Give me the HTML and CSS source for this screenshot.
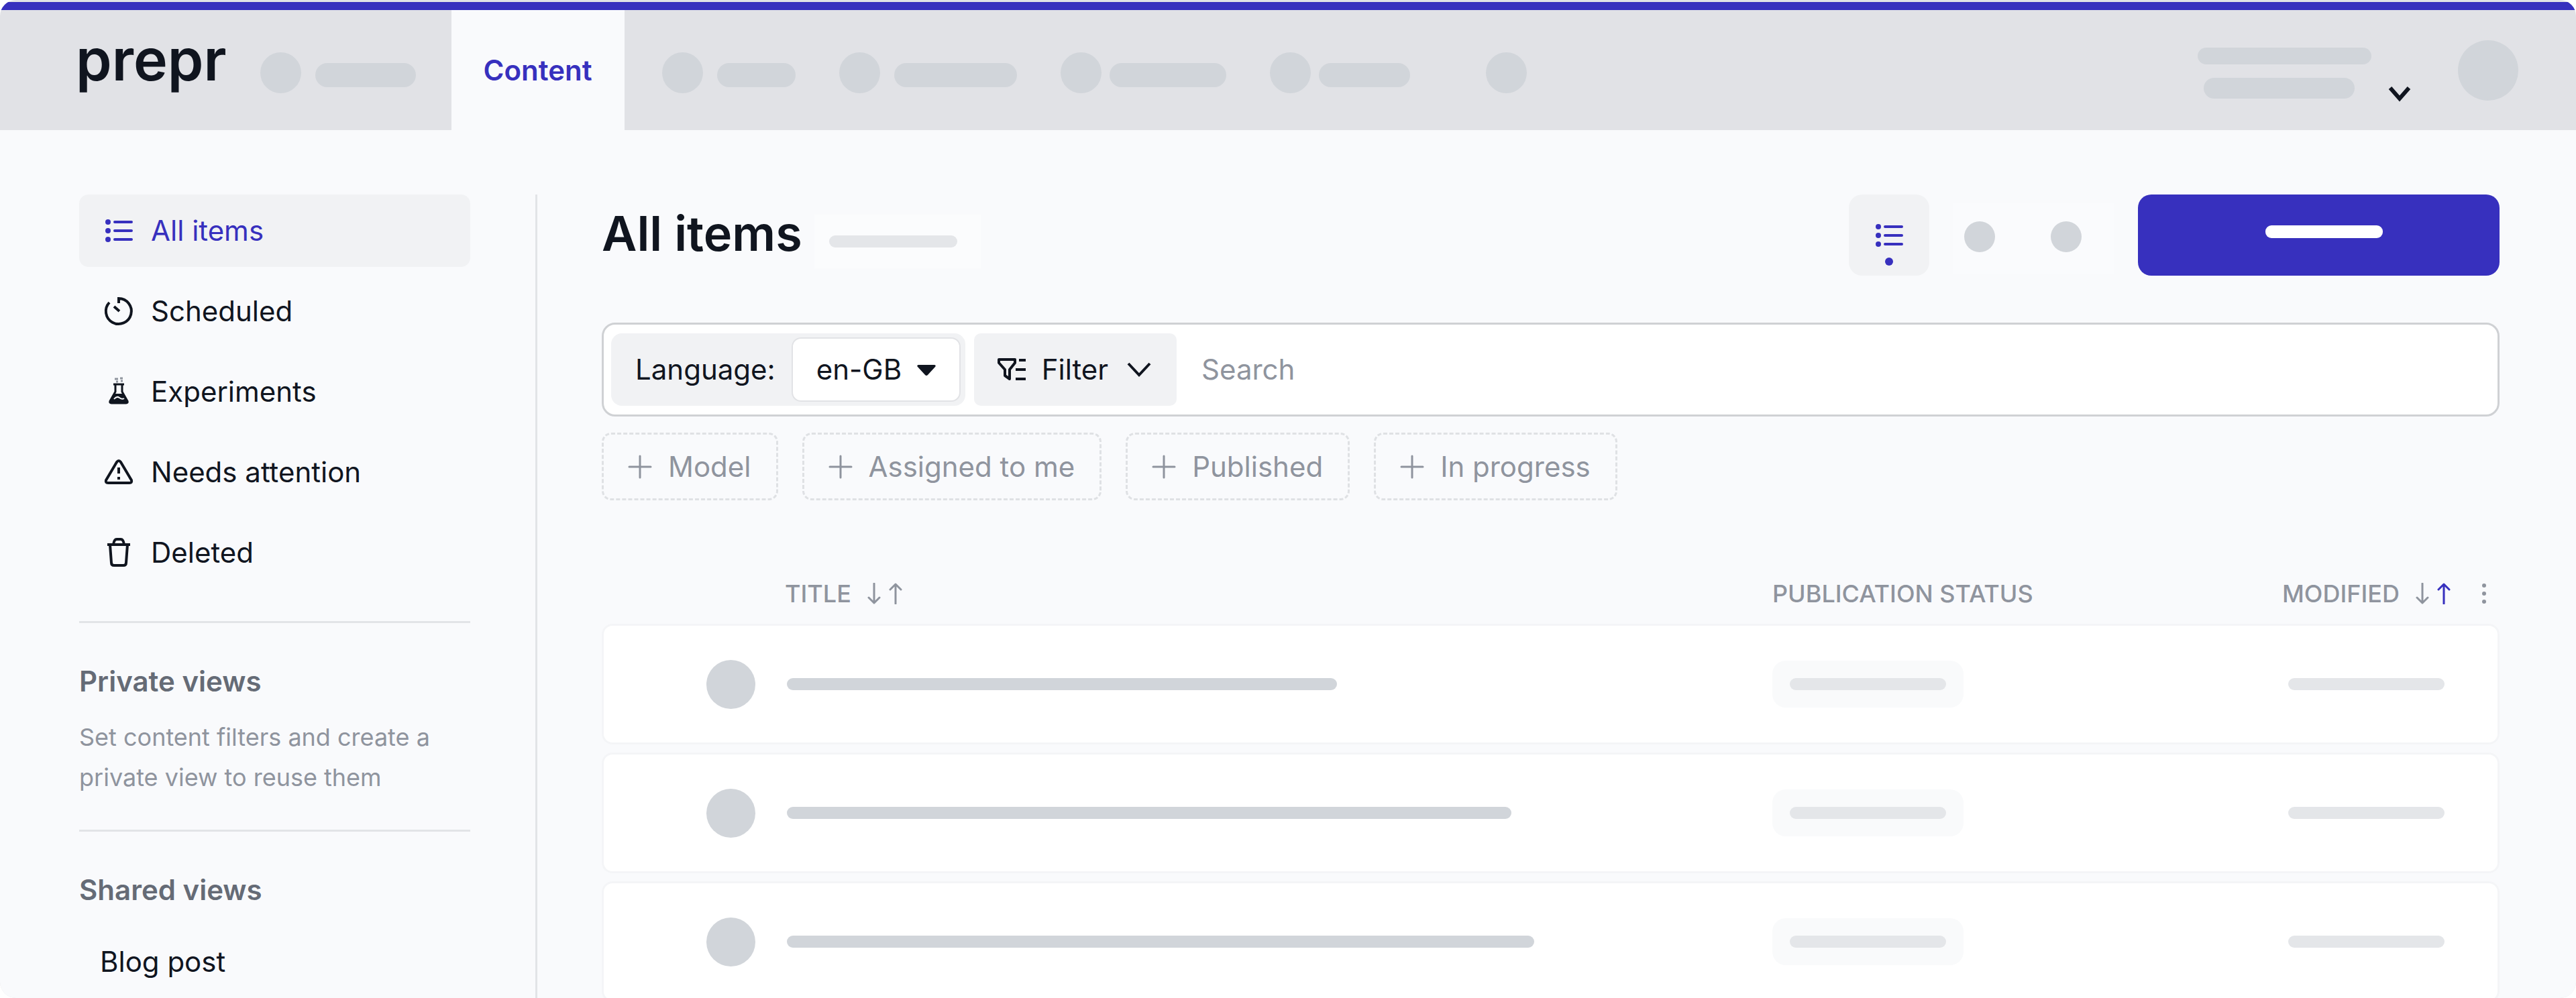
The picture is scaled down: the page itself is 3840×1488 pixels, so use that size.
FILE: index.html
```html
<!DOCTYPE html>
<html lang="en">
<head>
<meta charset="utf-8">
<meta name="viewport" content="width=device-width, initial-scale=1">
<title>All items – prepr</title>
<link rel="stylesheet" href="styles.css">
</head>
<body>
<svg class="sprite" aria-hidden="true">
  <symbol id="i-list" viewBox="0 0 48 48"><g fill="currentColor"><circle cx="8" cy="11" r="4"/><circle cx="8" cy="24" r="4"/><circle cx="8" cy="37" r="4"/></g><path d="M18 11h25M18 24h25M18 37h25" fill="none" stroke="currentColor" stroke-width="4" stroke-linecap="round"/></symbol>
  <symbol id="i-plus" viewBox="0 0 36 36"><path d="M18 2v32M2 18h32" fill="none" stroke="currentColor" stroke-width="3" stroke-linecap="round"/></symbol>
  <symbol id="i-down" viewBox="0 0 20 32"><path d="M10 1v29M2 22l8 8 8-8" fill="none" stroke="currentColor" stroke-width="3" stroke-linecap="round" stroke-linejoin="round"/></symbol>
  <symbol id="i-up" viewBox="0 0 20 32"><path d="M10 31V2M2 10l8-8 8 8" fill="none" stroke="currentColor" stroke-width="3" stroke-linecap="round" stroke-linejoin="round"/></symbol>
</svg>
<div class="app">
  <header class="topbar">
    <a class="logo" href="#">prepr</a>
    <nav class="tabs" aria-label="Main">
      <a class="tab-skeleton" href="#"><span class="dot"></span><span class="pill w-150"></span></a>
      <a class="tab-active" href="#">Content</a>
      <a class="tab-skeleton" href="#"><span class="dot"></span><span class="pill w-117"></span></a>
      <a class="tab-skeleton" href="#"><span class="dot"></span><span class="pill w-183"></span></a>
      <a class="tab-skeleton tight" href="#"><span class="dot"></span><span class="pill w-174"></span></a>
      <a class="tab-skeleton tight" href="#"><span class="dot"></span><span class="pill w-136"></span></a>
      <a class="tab-skeleton apart" href="#"><span class="dot"></span></a>
    </nav>
    <div class="account">
      <div class="account-lines"><span class="line-name"></span><span class="line-role"></span></div>
      <button class="account-toggle" type="button" aria-label="Switch environment"><svg width="36" height="28" viewBox="0 0 36 28"><path d="M4 4l14 16L32 4" fill="none" stroke="currentColor" stroke-width="6"/></svg></button>
      <span class="avatar"></span>
    </div>
  </header>

  <div class="layout">
    <aside class="sidebar">
      <nav class="views" aria-label="Views">
        <a class="view active" href="#"><svg class="icon"><use href="#i-list"/></svg>All items</a>
        <a class="view" href="#"><svg class="icon" viewBox="0 0 48 48"><path d="M24 12V5a19 19 0 1 1-14 6M17 17l8 7" fill="none" stroke="currentColor" stroke-width="4"/></svg>Scheduled</a>
        <a class="view" href="#"><svg class="icon" viewBox="0 0 48 48"><path d="M16 13h16M19 13v11L11 38q-1 3 2 3h22q3 0 2-3L29 24V13" fill="none" stroke="currentColor" stroke-width="3"/><path d="M17 27h14l6 10q1 4-3 4H14q-4 0-3-4z" fill="currentColor"/><path d="M17 35q4-5 8-2t7 1" fill="none" stroke="#f9fafc" stroke-width="2"/><path d="M18 5h5M26 4h4M20 9h3M27 8h3" stroke="#8f949d" stroke-width="3"/></svg>Experiments</a>
        <a class="view" href="#"><svg class="icon" viewBox="0 0 48 48"><path d="M21 9q3-4 6 0l16 27q1 4-3 4H8q-4 0-3-4z" fill="none" stroke="currentColor" stroke-width="4" stroke-linejoin="round"/><path d="M24 17v9M24 31v4" stroke="currentColor" stroke-width="4"/></svg>Needs attention</a>
        <a class="view" href="#"><svg class="icon" viewBox="0 0 48 48"><path d="M7 12h34M16 12q1-8 5-8h6q4 0 5 8M11 12l2 27q0 4 4 4h14q4 0 4-4l2-27" fill="none" stroke="currentColor" stroke-width="4"/></svg>Deleted</a>
      </nav>
      <hr>
      <section>
        <h2>Private views</h2>
        <p>Set content filters and create a private view to reuse them</p>
      </section>
      <hr>
      <section>
        <h2>Shared views</h2>
        <a class="view" href="#">Blog post</a>
      </section>
    </aside>

    <main class="content">
      <div class="title-row">
        <h1>All items</h1>
        <div class="count"><span></span></div>
        <div class="tools">
          <button class="mode" type="button" aria-label="List view"><svg class="icon"><use href="#i-list"/></svg></button>
          <div class="mode-rest"><span></span><span></span></div>
          <button class="primary" type="button" aria-label="Add item"><span></span></button>
        </div>
      </div>

      <form class="searchbar">
        <div class="language">
          <label for="language">Language:</label>
          <span class="select">
            <select id="language"><option>en-GB</option></select>
            <svg width="30" height="18" viewBox="0 0 30 18"><path d="M3 1h24q3 1 1 3L17 16q-2 2-4 0L2 4q-2-2 1-3z" fill="currentColor"/></svg>
          </span>
        </div>
        <button class="filter" type="button">
          <svg width="42" height="34" viewBox="0 0 42 34"><path d="M2 2h24v5l-8 10v14l-7-5v-9L2 7z" fill="none" stroke="currentColor" stroke-width="4" stroke-linejoin="round"/><path d="M32 3h10M27 17h15M27 31h15" stroke="currentColor" stroke-width="4"/></svg>
          Filter
          <svg class="chevron" width="36" height="22" viewBox="0 0 36 22"><path d="M2 2l16 17L34 2" fill="none" stroke="currentColor" stroke-width="4"/></svg>
        </button>
        <input type="search" placeholder="Search" aria-label="Search">
      </form>

      <div class="chips">
        <button class="chip" type="button"><svg width="36" height="36"><use href="#i-plus"/></svg>Model</button>
        <button class="chip" type="button"><svg width="36" height="36"><use href="#i-plus"/></svg>Assigned to me</button>
        <button class="chip" type="button"><svg width="36" height="36"><use href="#i-plus"/></svg>Published</button>
        <button class="chip" type="button"><svg width="36" height="36"><use href="#i-plus"/></svg>In progress</button>
      </div>

      <table class="items">
        <colgroup><col class="col-mark"><col><col class="col-status"><col class="col-modified"></colgroup>
        <thead>
          <tr>
            <td></td>
            <th scope="col"><div class="head">TITLE<span class="sort"><svg><use href="#i-down"/></svg><svg><use href="#i-up"/></svg></span></div></th>
            <th scope="col"><div class="head">PUBLICATION STATUS</div></th>
            <th scope="col"><div class="head">MODIFIED<span class="sort"><svg><use href="#i-down"/></svg><svg class="on"><use href="#i-up"/></svg></span>
              <button class="more" type="button" aria-label="Columns"><svg width="8" height="32" viewBox="0 0 8 32"><g fill="currentColor"><circle cx="4" cy="4" r="3"/><circle cx="4" cy="16" r="3"/><circle cx="4" cy="28" r="3"/></g></svg></button></div></th>
          </tr>
        </thead>
        <tbody>
          <tr><td class="mark"><span></span></td><td class="name"><span class="w-820"></span></td><td class="status"><span class="badge"><span></span></span></td><td class="modified"><span></span></td></tr>
          <tr><td class="mark"><span></span></td><td class="name"><span class="w-1080"></span></td><td class="status"><span class="badge"><span></span></span></td><td class="modified"><span></span></td></tr>
          <tr><td class="mark"><span></span></td><td class="name"><span class="w-1114"></span></td><td class="status"><span class="badge"><span></span></span></td><td class="modified"><span></span></td></tr>
        </tbody>
      </table>
    </main>
  </div>
</div>
</body>
</html>
```
FILE: styles.css
```css
:root {
  --ink: #10151f;
  --muted: #8f949e;
  --accent: #3730be;
  --page: #f9fafc;
  --bar: #e1e2e6;
  --skeleton: #d1d5da;
  --skeleton-light: #e4e6e9;
  --soft: #f1f2f4;
}

* { box-sizing: border-box; }

body {
  margin: 0;
  background: #fff;
  color: var(--ink);
  font: 400 42px/48px Inter, "Noto Sans", sans-serif;
}

a { color: inherit; text-decoration: none; }

button, select, input {
  margin: 0;
  padding: 0;
  border: 0;
  background: none;
  color: inherit;
  font: inherit;
}

svg { display: block; flex: none; }
.sprite { position: absolute; width: 0; height: 0; }
.icon { width: 48px; height: 48px; }

.app {
  display: flex;
  flex-direction: column;
  height: 100vh;
  padding-top: 3px;
  overflow: hidden;
  border-radius: 24px;
  background: var(--bar);
}

/* Top bar */
.topbar {
  display: flex;
  flex: none;
  height: 191px;
  padding: 0 86px 0 113px;
  border-top: 12px solid var(--accent);
}

.logo {
  align-self: center;
  padding-bottom: 32px;
  font-size: 86px;
  font-weight: 600;
  line-height: 100px;
}

.tabs { display: flex; margin-left: 50px; }

.tab-skeleton {
  display: flex;
  align-items: center;
  gap: 21px;
  margin-right: 65px;
  padding-top: 8px;
}
.tab-skeleton.tight { gap: 12px; }
.tab-skeleton.apart { margin-left: 48px; }
.tab-skeleton:first-child { margin-right: 53px; }

.tab-active {
  display: flex;
  align-items: center;
  margin-right: 56px;
  padding: 0 48px;
  background: var(--page);
  color: var(--accent);
  font-weight: 600;
}

.dot { width: 61px; height: 61px; border-radius: 50%; background: var(--skeleton); }
.pill { height: 36px; margin-top: 6px; border-radius: 18px; background: var(--skeleton); }
.w-117 { width: 117px; }
.w-136 { width: 136px; }
.w-150 { width: 150px; }
.w-174 { width: 174px; }
.w-183 { width: 183px; }

.account { display: flex; align-items: center; margin-left: auto; }
.account-lines { display: flex; flex-direction: column; gap: 20px; width: 259px; padding-top: 8px; }
.line-name, .line-role { border-radius: 16px; background: var(--skeleton); }
.line-name { height: 25px; }
.line-role { width: 225px; height: 31px; margin-left: 9px; }
.account-toggle { margin: 72px 69px 0 24px; align-self: flex-start; padding-top: 40px; }
.avatar { width: 90px; height: 90px; border-radius: 50%; background: var(--skeleton); }

/* Page body */
.layout {
  display: flex;
  flex: 1;
  min-height: 0;
  padding: 96px 114px 0 118px;
  background: var(--page);
}

.sidebar { flex: none; width: 583px; }
.views { display: flex; flex-direction: column; gap: 12px; margin-bottom: 48px; }

.view {
  display: flex;
  align-items: center;
  gap: 24px;
  height: 108px;
  padding: 0 35px;
  border-radius: 14px;
}
.view.active { background: var(--soft); color: var(--accent); }

.sidebar hr { height: 3px; margin: 0; border: 0; background: #e2e4e7; }
.sidebar section { padding-top: 63px; }
.sidebar section .view { padding-left: 31px; }

.sidebar h2 {
  margin: 0 0 29px;
  color: #656b76;
  font-size: 42px;
  font-weight: 600;
  line-height: 48px;
}

.sidebar p {
  margin: 0 0 48px;
  color: var(--muted);
  font-size: 36px;
  line-height: 60px;
}

.content {
  flex: 1;
  min-width: 0;
  margin-left: 97px;
  padding-left: 96px;
  border-left: 3px solid #e2e4e7;
}

/* Title row */
.title-row { display: flex; align-items: flex-start; height: 121px; margin-bottom: 70px; }
h1 { margin: 0; font-size: 72px; font-weight: 600; line-height: 115px; }
.count { margin: 30px 0 0 18px; padding: 31px 35px 31px 22px; background: #fbfcfd; }
.count span { display: block; width: 191px; height: 18px; border-radius: 9px; background: var(--skeleton-light); }

.tools { display: flex; gap: 36px; margin-left: auto; }

.mode {
  position: relative;
  display: flex;
  align-items: center;
  justify-content: center;
  width: 120px;
  height: 121px;
  border-radius: 20px;
  background: var(--soft);
  color: var(--accent);
}
.mode::after {
  content: "";
  position: absolute;
  bottom: 15px;
  left: 54px;
  width: 12px;
  height: 12px;
  border-radius: 50%;
  background: currentColor;
}

.mode-rest { display: flex; gap: 83px; height: 105px; margin-top: 13px; padding: 27px 48px 0 16px; background: #fafbfd; }
.mode-rest span { width: 46px; height: 46px; border-radius: 50%; background: var(--skeleton); }

.primary {
  display: flex;
  align-items: center;
  justify-content: center;
  width: 539px;
  height: 121px;
  padding: 0 0 10px 16px;
  border-radius: 20px;
  background: var(--accent);
}
.primary span { width: 175px; height: 19px; border-radius: 9px; background: #fff; }

/* Search bar */
.searchbar {
  display: flex;
  gap: 13px;
  margin: 0;
  padding: 13px 11px;
  border: 3px solid #cfd1d4;
  border-radius: 20px;
  background: #fff;
}

.language {
  display: flex;
  align-items: center;
  gap: 24px;
  height: 108px;
  padding: 0 7px 0 36px;
  border-radius: 16px;
  background: var(--soft);
}

.select { position: relative; }
.select select {
  display: block;
  width: 252px;
  height: 96px;
  padding: 0 35px;
  border: 2px solid #e2e3e6;
  border-radius: 14px;
  background: #fff;
  appearance: none;
}
.select svg { position: absolute; top: 40px; right: 36px; pointer-events: none; }

.filter {
  display: flex;
  align-items: center;
  gap: 24px;
  height: 108px;
  padding: 0 38px 0 35px;
  border-radius: 10px;
  background: var(--soft);
}
.filter .chevron { margin-left: 4px; }

.searchbar input { flex: 1; min-width: 0; padding-left: 24px; outline: 0; }
.searchbar input::placeholder { color: var(--muted); opacity: 1; }

.chips { display: flex; gap: 36px; margin-top: 24px; }
.chip {
  display: flex;
  align-items: center;
  gap: 24px;
  height: 101px;
  padding: 0 37px 0 36px;
  border: 3px dashed #dfe1e4;
  border-radius: 14px;
  color: var(--muted);
}

/* Items table */
.items {
  width: 100%;
  margin-top: 98px;
  border-spacing: 0 12px;
  table-layout: fixed;
}
.col-mark { width: 273px; }
.col-status { width: 760px; }
.col-modified { width: 324px; }

.items th {
  height: 62px;
  padding: 0 0 5px;
  color: var(--muted);
  font-size: 36px;
  font-weight: 500;
  text-align: left;
}
.head { display: flex; align-items: center; }
.sort { display: flex; gap: 12px; margin-left: 24px; }
.sort svg { width: 20px; height: 32px; }
.sort .on { color: var(--accent); }
.more { margin: 0 19px 0 auto; }

.items tbody td {
  height: 180px;
  padding: 0;
  border: solid #f4f5f7;
  border-width: 3px 0;
  background: #fff;
}
.items tbody td:first-child { border-left-width: 3px; border-radius: 16px 0 0 16px; }
.items tbody td:last-child { border-right-width: 3px; border-radius: 0 16px 16px 0; }

.items td span { display: block; }
.mark span { width: 73px; height: 73px; margin: 0 44px 0 auto; border-radius: 50%; background: var(--skeleton); }
.name > span { height: 18px; margin-left: 3px; border-radius: 9px; background: var(--skeleton); }
.w-820 { width: 820px; }
.w-1080 { width: 1080px; }
.w-1114 { width: 1114px; }
.badge { width: 285px; padding: 26px; border-radius: 20px; background: #f9fafb; }
.badge span, .modified > span { width: 233px; height: 18px; border-radius: 9px; background: var(--skeleton-light); }
.modified > span { margin-left: 9px; }
```
